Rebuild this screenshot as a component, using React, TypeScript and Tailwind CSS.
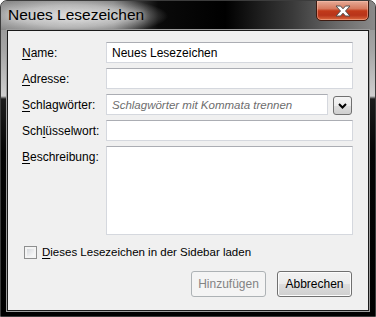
import React from 'react';

const font = "font-['Liberation_Sans',Arial,sans-serif]";

function Field({ label, keyIdx, children }: { label: string; keyIdx: number; children: React.ReactNode }) {
    return (
        <div className="flex items-center h-[21px]">
            <label className="w-[84px] shrink-0 text-[12px] text-black leading-none">
                {label.slice(0, keyIdx)}
                <span className="underline underline-offset-2">{label[keyIdx]}</span>
                {label.slice(keyIdx + 1)}
            </label>
            {children}
        </div>
    );
}

const inputBox = 'h-[21px] bg-white border border-[#d5d8de] border-t-[#abadb3] px-[5px] text-[12px] text-black outline-none';

export default function App() {
    return (
        <div className={`w-[376px] h-[317px] bg-white ${font}`}>
            <div className="relative flex flex-col w-full h-full rounded-t-[7px] overflow-hidden border border-[#3c3c3c] bg-[linear-gradient(to_bottom,#8c8c8c_0px,#a6a6a6_50px,#cfcfcf_95px,#1c1c1c_98px,#050505_150px,#000_100%)]">
                {/* Title bar */}
                <div className="flex items-start h-[29px] shrink-0 bg-[radial-gradient(ellipse_95px_20px_at_72px_15px,rgba(225,225,225,0.95),rgba(225,225,225,0.6)_55%,rgba(225,225,225,0)),linear-gradient(to_right,#8a8a8a_0%,#707070_30%,#0a0a0a_42%,#000_60%,#3a3a3a_78%,#6a6a6a_90%,#8a8a8a_100%)]">
                    <span className="pl-[7px] pt-[4px] text-[15.5px] text-black leading-[20px] [text-shadow:0_0_6px_#e8e8e8]">
                        Neues Lesezeichen
                    </span>
                    <button className="ml-auto mr-[6px] -mt-px flex items-center justify-center w-[53px] h-[21px] rounded-b-[5px] border border-[#3d1a10] shadow-[inset_0_0_0_1px_rgba(255,200,180,0.45)] bg-[linear-gradient(to_bottom,#e6ab98_0%,#d67a5f_40%,#c13a1a_52%,#b8341a_75%,#d9693f_100%)]">
                        <svg width="16" height="12" viewBox="0 0 16 12">
                            <path
                                d="M1 1 H5.5 L8 3.8 L10.5 1 H15 L10.5 6 L15 11 H10.5 L8 8.2 L5.5 11 H1 L5.5 6 Z"
                                fill="#ffffff"
                                stroke="#505050"
                                strokeWidth="1"
                                strokeLinejoin="round"
                            />
                        </svg>
                    </button>
                </div>

                {/* Dialog body */}
                <div className="flex-1 flex px-[6px] pb-[5px]">
                    <div className="flex-1 flex flex-col bg-[#f0f0f0] border border-[#1a1a1a] shadow-[0_0_0_1px_#9c9c9c] pt-[11px] pl-[14px] pr-[15px]">
                        <div className="flex flex-col gap-[5px]">
                            <Field label="Name:" keyIdx={0}>
                                <input
                                    className={`${inputBox} flex-1 border-[#a8c9ea] border-t-[#7aa7d8]`}
                                    defaultValue="Neues Lesezeichen"
                                />
                            </Field>
                            <Field label="Adresse:" keyIdx={0}>
                                <input className={`${inputBox} flex-1`} />
                            </Field>
                            <Field label="Schlagwörter:" keyIdx={0}>
                                <input
                                    className={`${inputBox} flex-1 placeholder:italic placeholder:text-[11.5px] placeholder:text-[#6d6d6d]`}
                                    placeholder="Schlagwörter mit Kommata trennen"
                                />
                                <button className="ml-[5px] mr-px mt-[2px] flex items-center justify-center w-[19px] h-[19px] rounded-[3px] border border-[#707070] bg-[linear-gradient(to_bottom,#f4f4f4_0%,#ececec_50%,#dddddd_52%,#cfcfcf_100%)]">
                                    <svg width="9" height="6" viewBox="0 0 9 6">
                                        <path d="M1 1 L4.5 4.5 L8 1" fill="none" stroke="#000" strokeWidth="2" />
                                    </svg>
                                </button>
                            </Field>
                            <Field label="Schlüsselwort:" keyIdx={3}>
                                <input className={`${inputBox} flex-1`} />
                            </Field>
                            <div className="flex items-start">
                                <label className="w-[84px] shrink-0 pt-[5px] text-[12px] text-black leading-none">
                                    <span className="underline underline-offset-2">B</span>eschreibung:
                                </label>
                                <textarea className="flex-1 h-[89px] resize-none bg-white border border-[#d5d8de] border-t-[#abadb3] outline-none" />
                            </div>
                        </div>

                        <div className="flex items-center mt-[11px] pl-[2px]">
                            <div className="w-[13px] h-[13px] border border-[#8e8f8f] bg-[#f4f4f4] p-[2px]">
                                <div className="w-full h-full bg-[linear-gradient(135deg,#d6d9dd,#fafafa)]" />
                            </div>
                            <span className="ml-[5px] text-[11.5px] text-black leading-none">
                                <span className="underline underline-offset-2">D</span>ieses Lesezeichen in der Sidebar laden
                            </span>
                        </div>

                        <div className="flex justify-end gap-[11px] mt-[12px] mr-px">
                            <button
                                disabled
                                className="w-[75px] h-[26px] rounded-[3px] border border-[#adb2b5] bg-[#f4f4f4] text-[12px] text-[#838383]"
                            >
                                Hinzufügen
                            </button>
                            <button className="w-[75px] h-[26px] rounded-[3px] border border-[#707070] shadow-[inset_0_0_0_1px_#fcfcfc] bg-[linear-gradient(to_bottom,#f2f2f2_0%,#ebebeb_50%,#dddddd_52%,#cfcfcf_100%)] text-[12px] text-black">
                                Abbrechen
                            </button>
                        </div>
                    </div>
                </div>
            </div>
        </div>
    );
}
